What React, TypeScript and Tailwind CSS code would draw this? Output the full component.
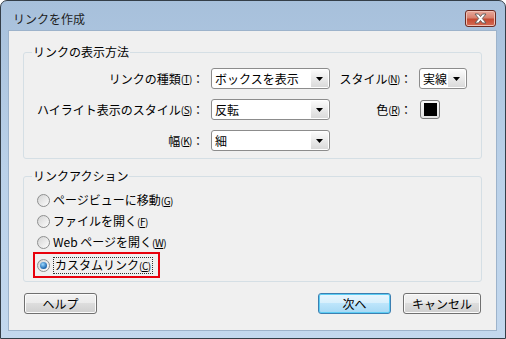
import React from "react"

const btn =
  "h-[21px] flex items-center justify-center rounded-[3px] border border-[#707070] bg-[linear-gradient(#f2f2f2,#ebebeb_50%,#dddddd_50%,#cfcfcf)] shadow-[inset_0_0_0_1px_#fbfbfb] text-[12px] leading-[14px]"

function Key({ k }: { k: string }) {
  return (
    <span className="text-[10px] tracking-[-0.5px]">
      (<u className="underline-offset-1">{k}</u>)
    </span>
  )
}

function Combo({ value, width }: { value: string; width: string }) {
  return (
    <div className={width + " h-[21px] flex rounded-[3px] border border-[#8c8c8c] bg-white p-[1px]"}>
      <div className="flex-1 flex items-center pl-[2px] leading-[14px] whitespace-nowrap overflow-hidden">
        {value}
      </div>
      <div className="w-[17px] flex items-center justify-center bg-gradient-to-b from-[#fbfbfb] to-[#dadada]">
        <svg width="7" height="4" viewBox="0 0 7 4">
          <path d="M0 0H7L3.5 4Z" fill="#000" />
        </svg>
      </div>
    </div>
  )
}

function Radio({ checked }: { checked?: boolean }) {
  return (
    <span className="w-[13px] h-[13px] shrink-0 rounded-full border border-[#8e8f8f] bg-gradient-to-br from-[#d4d4d4] to-[#fdfdfd] flex items-center justify-center">
      {checked && (
        <span className="w-[7px] h-[7px] rounded-full bg-[radial-gradient(circle_at_40%_35%,#9ad8ff,#1a64ad_70%,#0c3f78)]" />
      )}
    </span>
  )
}

function Label({ children }: { children: React.ReactNode }) {
  return <div className="h-[21px] flex items-center justify-end whitespace-nowrap leading-[14px]">{children}</div>
}

export default function App() {
  return (
    <div className="w-[506px] h-[339px] bg-white text-[12px] text-black font-['Noto_Sans_CJK_JP','Noto_Sans',sans-serif]">
      <div className="w-full h-full flex flex-col border border-[#343e48] rounded-t-[7px] bg-gradient-to-b from-[#a7c0db] via-[#bad1e9] to-[#c3d8ee] pl-[7px] pr-[8px] pb-[7px]">
        {/* title bar */}
        <div className="h-[29px] flex justify-between shrink-0">
          <div className="pt-[11px] pl-[5px] leading-[14px] text-[#1e1e1e]">リンクを作成</div>
          <div className="mt-[9px] mr-[1px] w-[31px] h-[17px] rounded-[3px] border border-[#6b2b22] bg-[linear-gradient(#e9a99b,#d8826f_45%,#c44a32_55%,#d66c55)] shadow-[inset_0_0_0_1px_#f0c0b4] flex items-center justify-center">
            <svg width="13" height="11" viewBox="0 0 13 11">
              <path
                d="M1 1H4.5L6.5 3.6L8.5 1H12L8.3 5.5L12 10H8.5L6.5 7.4L4.5 10H1L4.7 5.5Z"
                fill="#fff"
                stroke="#5a5a5a"
                strokeWidth="0.9"
                strokeLinejoin="round"
              />
            </svg>
          </div>
        </div>

        {/* client area */}
        <div className="flex-1 bg-[#f0f0f0] border border-[#9db3cb] px-[14px] pt-[14px] flex flex-col">
          <fieldset className="border border-[#d5dfe5] rounded-[3px] pt-[9px] pb-[7px]">
            <legend className="ml-[8px] px-[1px] leading-[14px]">リンクの表示方法</legend>
            <div className="grid grid-cols-[180px_119px_75px_48px] gap-x-[7px] gap-y-[10px]">
              <Label>
                リンクの種類<Key k="T" />：
              </Label>
              <Combo value="ボックスを表示" width="w-[119px]" />
              <Label>
                スタイル<Key k="N" />：
              </Label>
              <Combo value="実線" width="w-[48px]" />

              <Label>
                ハイライト表示のスタイル<Key k="S" />：
              </Label>
              <Combo value="反転" width="w-[119px]" />
              <Label>
                色<Key k="R" />：
              </Label>
              <div className="h-[21px] flex items-center">
                <div className="w-[20px] h-[19px] ml-[1px] rounded-[3px] border border-[#7a7a7a] bg-gradient-to-b from-[#fafafa] to-[#e2e2e2] flex items-center justify-center">
                  <div className="w-[13px] h-[13px] bg-black" />
                </div>
              </div>

              <Label>
                幅<Key k="K" />：
              </Label>
              <Combo value="細" width="w-[119px]" />
            </div>
          </fieldset>

          <fieldset className="mt-[10px] border border-[#d5dfe5] rounded-[3px] pt-[7px] pb-[3px]">
            <legend className="ml-[8px] px-[1px] leading-[14px]">リンクアクション</legend>
            <div className="flex flex-col">
              <div className="h-[21px] flex items-center gap-[3px] pl-[13px] leading-[14px]">
                <Radio />
                <span>
                  ページビューに移動<Key k="G" />
                </span>
              </div>
              <div className="h-[21px] flex items-center gap-[3px] pl-[13px] leading-[14px]">
                <Radio />
                <span>
                  ファイルを開く<Key k="F" />
                </span>
              </div>
              <div className="h-[21px] flex items-center gap-[3px] pl-[13px] leading-[14px]">
                <Radio />
                <span>
                  Web ページを開く<Key k="W" />
                </span>
              </div>
              <div className="mt-[-1px] ml-[9px] w-[127px] h-[26px] border-2 border-[#e8000b] flex items-center gap-[3px] pl-[2px] leading-[14px]">
                <Radio checked />
                <span className="border border-dotted border-[#333] px-[1px] leading-[14px]">
                  カスタムリンク<Key k="C" />
                </span>
              </div>
            </div>
          </fieldset>

          <div className="mt-[11px] flex items-center">
            <button className={btn + " w-[73px] ml-[1px]"}>ヘルプ</button>
            <div className="flex-1" />
            <button className="h-[21px] w-[73px] flex items-center justify-center rounded-[3px] border border-[#3c7fb1] bg-[linear-gradient(#e9f6fe,#d6effc_50%,#bde5fb_50%,#a6d8f4)] shadow-[inset_0_0_0_1px_#5ccdf4] text-[12px] leading-[14px]">
              次へ
            </button>
            <button className={btn + " w-[78px] ml-[12px] mr-[1px]"}>キャンセル</button>
          </div>
        </div>
      </div>
    </div>
  )
}
